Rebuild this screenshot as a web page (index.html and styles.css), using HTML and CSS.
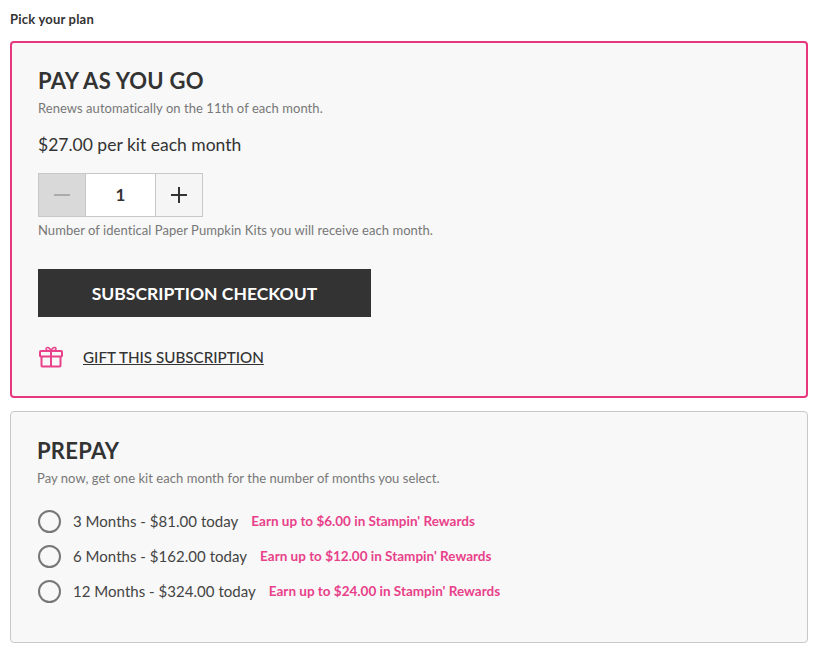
FILE: index.html
```html
<!DOCTYPE html>
<html>
<head>
    <meta charset="utf-8" />
    <title>Pick your plan</title>
    <link rel="stylesheet" href="styles.css">
</head>
<body>
    <p class="pick-title">Pick your plan</p>

    <div class="plan plan-selected">
        <h2 class="plan-name">PAY AS YOU GO</h2>
        <p class="plan-note">Renews automatically on the 11th of each month.</p>
        <p class="plan-price">$27.00 per kit each month</p>

        <div class="stepper">
            <button class="step step-off"><span class="minus"></span></button>
            <div class="step-value">1</div>
            <button class="step"><span class="plus"></span></button>
        </div>
        <p class="plan-note stepper-note">Number of identical Paper Pumpkin Kits you will receive each month.</p>

        <button class="checkout">SUBSCRIPTION CHECKOUT</button>

        <div class="gift">
            <svg class="gift-icon" width="24" height="22" viewBox="0 0 24 22" fill="none" stroke="#e8418a" stroke-width="2">
                <rect x="1" y="5" width="22" height="5.500" rx="1" />
                <path d="M2.500 10.500V19.500a1 1 0 0 0 1 1h17a1 1 0 0 0 1-1V10.500" />
                <path d="M12 5v15.500" />
                <path d="M12 5C10 5 7 4.500 7 2.800S10.500 .2 12 5C13.500 .2 17 1 17 2.800S14 5 12 5z" stroke-width="1.500" />
            </svg>
            <a class="gift-link" href="#">GIFT THIS SUBSCRIPTION</a>
        </div>
    </div>

    <div class="plan plan-prepay">
        <h2 class="plan-name">PREPAY</h2>
        <p class="plan-note">Pay now, get one kit each month for the number of months you select.</p>

        <div class="options">
            <div class="option">
                <span class="radio"></span>
                <span class="option-text">3 Months - $81.00 today</span>
                <span class="option-reward">Earn up to $6.00 in Stampin' Rewards</span>
            </div>
            <div class="option">
                <span class="radio"></span>
                <span class="option-text">6 Months - $162.00 today</span>
                <span class="option-reward">Earn up to $12.00 in Stampin' Rewards</span>
            </div>
            <div class="option">
                <span class="radio"></span>
                <span class="option-text">12 Months - $324.00 today</span>
                <span class="option-reward">Earn up to $24.00 in Stampin' Rewards</span>
            </div>
        </div>
    </div>
</body>
</html>
```

FILE: styles.css
```css
body {
    margin: 0;
    padding: 0 12px 0 10px;
    background-color: white;
    color: #333;
    font-family: "Lato", sans-serif;
}
p, h2 {
    margin: 0;
}
.pick-title {
    height: 41px;
    padding-top: 12px;
    box-sizing: border-box;
    font-size: 13px;
    line-height: 15px;
    font-weight: 700;
    letter-spacing: .2px;
}
.plan {
    background-color: #f8f8f8;
    border-radius: 4px;
    box-sizing: border-box;
}
.plan-selected {
    height: 357px;
    border: 2px solid #e6377f;
    padding: 25px 26px 0 26px;
}
.plan-prepay {
    height: 232px;
    margin-top: 13px;
    border: 1px solid #c8c8c8;
    padding: 26px 26px 0 26px;
}
.plan-name {
    font-size: 22px;
    line-height: 26px;
    font-weight: 700;
    letter-spacing: .25px;
}
.plan-note {
    margin-top: 6px;
    font-size: 13px;
    line-height: 16px;
    color: #777;
    letter-spacing: .05px;
}
.plan-price {
    margin-top: 18px;
    font-size: 17.500px;
    line-height: 22px;
}
.stepper {
    display: flex;
    width: 165px;
    height: 44px;
    margin-top: 17px;
    border: 1px solid #c8c8c8;
    box-sizing: border-box;
}
.step {
    display: flex;
    align-items: center;
    justify-content: center;
    width: 46px;
    padding: 0;
    border: none;
    background-color: #f5f5f5;
}
.step-off {
    background-color: #d9d9d9;
}
.step-value {
    flex: 1;
    border-left: 1px solid #c8c8c8;
    border-right: 1px solid #c8c8c8;
    background-color: white;
    text-align: center;
    font-size: 17px;
    line-height: 42px;
    font-weight: 700;
}
.minus {
    width: 16px;
    height: 2px;
    background-color: #aaa;
}
.plus {
    width: 16px;
    height: 16px;
    background: linear-gradient(#333, #333) center / 16px 2px no-repeat,
                linear-gradient(#333, #333) center / 2px 16px no-repeat;
}
.stepper-note {
    margin-top: 5px;
}
.checkout {
    display: block;
    width: 333px;
    height: 48px;
    margin-top: 31px;
    border: none;
    background-color: #333;
    color: white;
    font-family: inherit;
    font-size: 17.500px;
    font-weight: 700;
}
.gift {
    display: flex;
    align-items: center;
    margin-top: 29px;
    padding-left: 1px;
}
.gift-icon {
    display: block;
}
.gift-link {
    margin-left: 20px;
    color: #333;
    font-size: 15.200px;
    font-weight: 500;
}
.options {
    margin-top: 24px;
    display: flex;
    flex-direction: column;
    gap: 13px;
}
.option {
    display: flex;
    align-items: center;
    height: 22px;
    padding-left: 1px;
}
.radio {
    width: 23px;
    height: 23px;
    flex-shrink: 0;
    border: 2px solid #777;
    border-radius: 50%;
    box-sizing: border-box;
}
.option-text {
    margin-left: 12px;
    font-size: 15px;
    letter-spacing: .03px;
    color: #444;
}
.option-reward {
    margin-left: 13px;
    color: #e8418a;
    font-size: 13.500px;
    font-weight: 700;
}
```
